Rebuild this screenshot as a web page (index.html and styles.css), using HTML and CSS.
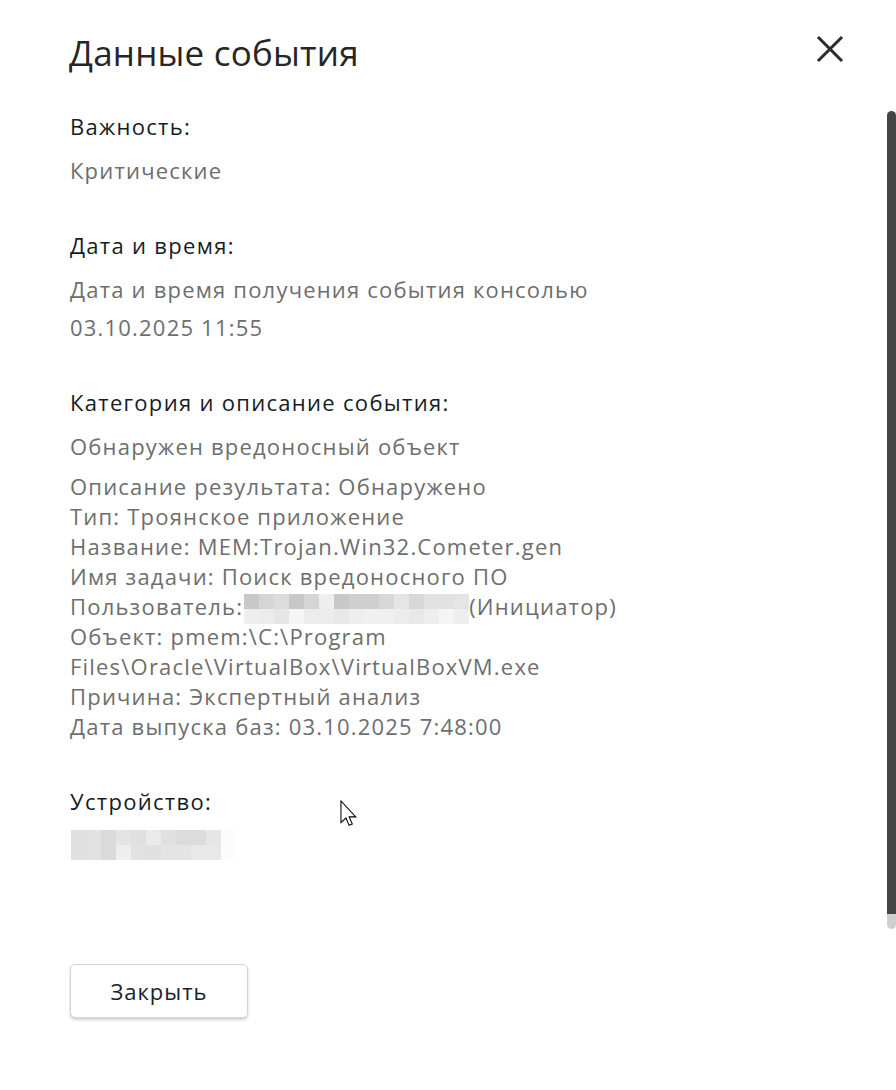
FILE: index.html
```html
<!DOCTYPE html>
<html lang="ru">
<head>
<meta charset="utf-8">
<title>Данные события</title>
<link rel="stylesheet" href="styles.css">
</head>
<body>
<div class="dialog">
  <header class="head">
    <h1 class="title">Данные события</h1>
    <button class="close" aria-label="Закрыть">
      <svg width="28" height="28" viewBox="0 0 28 28"><path d="M3 3 L25 25 M25 3 L3 25" stroke="#2b2b2b" stroke-width="3" stroke-linecap="square"/></svg>
    </button>
  </header>
  <main class="body">
    <section class="field">
      <div class="label">Важность:</div>
      <p class="value">Критические</p>
    </section>
    <section class="field">
      <div class="label">Дата и время:</div>
      <p class="value">Дата и время получения события консолью</p>
      <p class="value tight">03.10.2025 11:55</p>
    </section>
    <section class="field">
      <div class="label">Категория и описание события:</div>
      <p class="value">Обнаружен вредоносный объект</p>
      <p class="value multi">Описание результата: Обнаружено<br>Тип: Троянское приложение<br>Название: MEM:Trojan.Win32.Cometer.gen<br>Имя задачи: Поиск вредоносного ПО<br>Пользователь: <span class="blur b15"><span style="background:#c8c8c8"></span><span style="background:#d5d5d5"></span><span style="background:#dcdcdc"></span><span style="background:#c8c8c8"></span><span style="background:#d5d5d5"></span><span style="background:#eeeeee"></span><span style="background:#c8c8c8"></span><span style="background:#cfcfcf"></span><span style="background:#cfcfcf"></span><span style="background:#d8d8d8"></span><span style="background:#e5e5e5"></span><span style="background:#d8d8d8"></span><span style="background:#e2e2e2"></span><span style="background:#e2e2e2"></span><span style="background:#e5e5e5"></span><span style="background:#eeeeee"></span><span style="background:#ececec"></span><span style="background:#e6e6e6"></span><span style="background:#f5f5f5"></span><span style="background:#ececec"></span><span style="background:#ececec"></span><span style="background:#e8e8e8"></span><span style="background:#eeeeee"></span><span style="background:#f0f0f0"></span><span style="background:#f0f0f0"></span><span style="background:#ececec"></span><span style="background:#e8e8e8"></span><span style="background:#eeeeee"></span><span style="background:#f5f5f5"></span><span style="background:#eeeeee"></span></span>(Инициатор)<br>Объект: pmem:\C:\Program<br>Files\Oracle\VirtualBox\VirtualBoxVM.exe<br>Причина: Экспертный анализ<br>Дата выпуска баз: 03.10.2025 7:48:00</p>
    </section>
    <section class="field">
      <div class="label">Устройство:</div>
      <div class="blur b11 device"><span style="background:#e0e0e0"></span><span style="background:#e2e2e2"></span><span style="background:#dadada"></span><span style="background:#e4e4e4"></span><span style="background:#e0e0e0"></span><span style="background:#eaeaea"></span><span style="background:#e0e0e0"></span><span style="background:#dcdcdc"></span><span style="background:#dcdcdc"></span><span style="background:#e6e6e6"></span><span style="background:#fcfcfc"></span><span style="background:#e0e0e0"></span><span style="background:#e2e2e2"></span><span style="background:#dadada"></span><span style="background:#eeeeee"></span><span style="background:#e2e2e2"></span><span style="background:#e0e0e0"></span><span style="background:#e4e4e4"></span><span style="background:#e4e4e4"></span><span style="background:#e8e8e8"></span><span style="background:#e8e8e8"></span><span style="background:#fcfcfc"></span></div>
    </section>
  </main>
  <footer class="foot">
    <button class="btn">Закрыть</button>
  </footer>
  <div class="scrollbar"><div class="thumb"></div><div class="track-end"></div></div>
  <svg class="cursor" width="18" height="27" viewBox="0 0 13 19.5"><path d="M0.7 0.7 L0.7 16.3 L4.3 13 L6.6 18.3 L8.9 17.3 L6.6 12.2 L11.4 12.2 Z" fill="#fff" stroke="#000" stroke-width="0.75" stroke-linejoin="miter"/></svg>
</div>
</body>
</html>
```

FILE: styles.css
```css
* { box-sizing: border-box; }
html, body { margin: 0; padding: 0; background: #fff; }
body {
  font-family: "Open Sans", "Noto Sans", "DejaVu Sans", sans-serif;
  width: 896px;
  height: 1090px;
  overflow: hidden;
}
.dialog {
  position: relative;
  height: 1090px;
  padding: 0 0 0 69px;
}
.head {
  display: flex;
  align-items: center;
  justify-content: space-between;
  padding: 31px 52px 0 0;
  height: 75px;
}
.title {
  margin: 0;
  font-size: 35px;
  font-weight: 400;
  color: #262626;
  line-height: 44px;
  letter-spacing: 0.2px;
}
.close {
  border: 0;
  background: none;
  padding: 0;
  width: 28px;
  height: 28px;
  margin-top: -8px;
  cursor: pointer;
}
.body {
  display: flex;
  flex-direction: column;
  gap: 45px;
  padding-top: 36px;
  padding-left: 1px;
}
.field { display: flex; flex-direction: column; }
.label {
  font-size: 22px;
  line-height: 30px;
  letter-spacing: 1.3px;
  color: #141d25;
  margin-bottom: 14px;
}
.value {
  margin: 0;
  font-size: 22px;
  line-height: 30px;
  letter-spacing: 1.2px;
  color: #6e6e6e;
}
.tight { margin-top: 8px; }
.multi { margin-top: 10px; }
.blur {
  display: inline-grid;
  grid-auto-rows: 15px;
  vertical-align: top;
  height: 30px;
  margin: 0 0 0 -6px;
  transform: translateY(3px);
}
.blur span { display: block; }
.b15 { grid-template-columns: repeat(15, 15px); }
.b11 { grid-template-columns: repeat(11, 15px); }
.device {
  display: grid;
  transform: none;
  margin: 0 0 0 1px;
  align-self: flex-start;
}
.foot {
  padding-top: 104px;
  padding-left: 1px;
}
.btn {
  width: 178px;
  height: 54px;
  border: 1px solid #d3d3d3;
  border-radius: 5px;
  background: #fff;
  box-shadow: 0 2px 3px rgba(0,0,0,0.18);
  font-family: inherit;
  font-size: 22px;
  letter-spacing: 1px;
  color: #18222b;
  cursor: pointer;
}
.scrollbar {
  position: absolute;
  top: 111px;
  right: 0;
  width: 9px;
  height: 818px;
  display: flex;
  flex-direction: column;
}
.thumb {
  flex: 1;
  background: #444;
  border-radius: 5px 5px 0 0;
}
.track-end {
  height: 15px;
  background: #cfcfcf;
  border-radius: 0 0 5px 5px;
}
.cursor {
  position: absolute;
  left: 340px;
  top: 800px;
}
```
